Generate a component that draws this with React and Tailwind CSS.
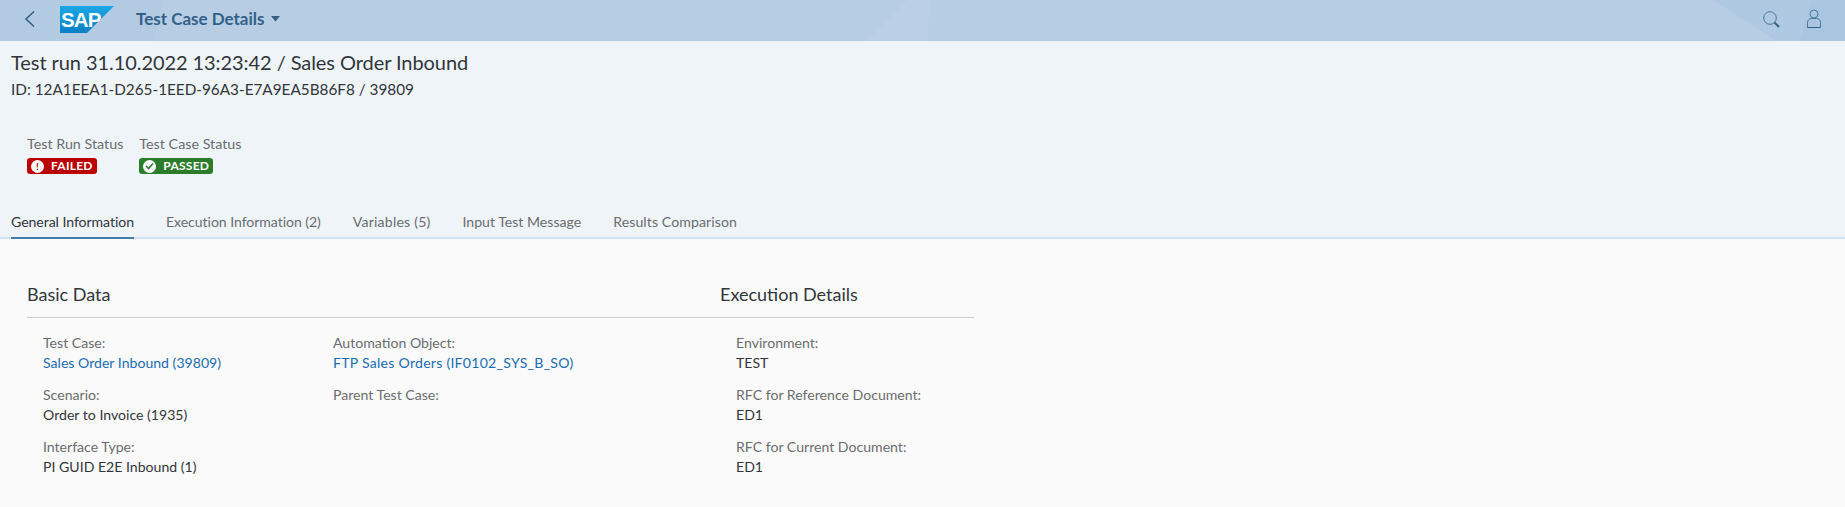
import React from 'react';

const FONT = "font-['Lato','Liberation_Sans',sans-serif]";

const SapLogo = () => (
  <svg width="54" height="27" viewBox="0 0 54 27">
    <defs>
      <linearGradient id="sapBlue" x1="0" y1="0" x2="0" y2="1">
        <stop offset="0" stopColor="#1ba8e4" />
        <stop offset="1" stopColor="#0a7fc7" />
      </linearGradient>
    </defs>
    <polygon points="0,0 54,0 27,27 0,27" fill="url(#sapBlue)" />
    <text x="1" y="20.500" fontFamily="'Liberation Sans', sans-serif" fontWeight="700" fontSize="20.500" letterSpacing="-0.9" fill="#fff">SAP</text>
  </svg>
);

const SearchIcon = () => (
  <svg width="17" height="17" viewBox="0 0 17 17" fill="none">
    <circle cx="7" cy="7" r="6.300" stroke="#4d7a9c" strokeWidth="1" />
    <path d="M11.500 11.500l4.500 4.500" stroke="#346187" strokeWidth="2" />
  </svg>
);

const UserIcon = () => (
  <svg width="16" height="20" viewBox="0 0 16 20" fill="none" stroke="#4d7a9c" strokeWidth="1">
    <circle cx="8" cy="5" r="4" />
    <path d="M1.500 18.500v-5c0-2.500 2-4 4-4h5c2 0 4 1.500 4 4v5z" />
    <path d="M1.500 18.500h13" stroke="#346187" />
  </svg>
);

const Badge = ({ color, icon, children }) => (
  <span className={`inline-flex h-4 items-center gap-[7px] rounded-[3px] pl-[4px] pr-[4px] text-[12px] font-bold tracking-[0.25px] text-white ${color}`}>
    {icon}
    {children}
  </span>
);

const Field = ({ label, value, link, wide }) => (
  <div className="flex h-[52px] flex-col text-[14.1px] leading-5">
    <span className="text-[#6a6d70]">{label}</span>
    {value && (
      <span className={`${link ? 'text-[#1a6db3]' : 'text-[#32363a]'} ${wide ? 'tracking-[0.25px]' : ''}`}>{value}</span>
    )}
  </div>
);

export default function App() {
  const tabs = [
    { label: 'General Information', cls: 'border-b-2 border-[#427cac] text-[#32363a] tracking-[-0.06px]' },
    { label: 'Execution Information (2)', cls: 'text-[#6a6d70] tracking-[-0.06px]' },
    { label: 'Variables (5)', cls: 'text-[#6a6d70] tracking-[0.2px]' },
    { label: 'Input Test Message', cls: 'text-[#6a6d70]' },
    { label: 'Results Comparison', cls: 'text-[#6a6d70] tracking-[0.1px]' },
  ];

  return (
    <div className={`flex h-[507px] w-[1845px] flex-col overflow-hidden bg-[#fafafa] ${FONT}`}>
      {/* Shell bar */}
      <header className="relative flex h-[41px] shrink-0 items-center bg-[#b6cde4] pb-[3px]">
        <svg className="absolute inset-0" width="1845" height="41">
          <polygon points="0,0 163,0 154,41 0,41" fill="#b2cae2" />
          <polygon points="907,0 929,0 928,41 867,41" fill="#bbd0e6" />
          <polygon points="1713,0 1845,0 1845,41 1777,41" fill="#b0c9e2" />
          <polygon points="1812,0 1845,0 1845,41 1800,41" fill="#a9c5e0" />
        </svg>
        <div className="relative ml-[24px] flex items-center">
          <svg width="12" height="18" viewBox="0 0 12 18" fill="none">
            <path d="M10 1.500L2 9l8 7.500" stroke="#346187" strokeWidth="1.600" />
          </svg>
          <div className="ml-[24px] flex">
            <SapLogo />
          </div>
          <span className="ml-[22px] text-[17px] font-bold text-[#346187]">Test Case Details</span>
          <svg className="ml-[6px]" width="9" height="6" viewBox="0 0 9 6">
            <polygon points="0,0 9,0 4.500,5.500" fill="#346187" />
          </svg>
        </div>
        <div className="relative ml-auto mr-[23px] flex items-center gap-[26px]">
          <SearchIcon />
          <UserIcon />
        </div>
      </header>

      {/* Object header */}
      <section className="h-[198px] shrink-0 border-b-2 border-[#d1e0ee] bg-[#eff4f9]">
        <div className="pl-[11px] pt-[8px]">
          <h1 className="text-[20px] leading-[27px] tracking-[-0.07px] text-[#32363a]">Test run 31.10.2022 13:23:42 / Sales Order Inbound</h1>
          <p className="mt-[3px] text-[15.300px] leading-5 text-[#32363a]">ID: 12A1EEA1-D265-1EED-96A3-E7A9EA5B86F8 / 39809</p>
        </div>
        <div className="ml-[27px] mt-[36px] flex gap-4">
          <div>
            <div className="text-[14.300px] leading-[18px] text-[#6a6d70]">Test Run Status</div>
            <div className="mt-[5px] flex">
              <Badge
                color="bg-[#bb0000]"
                icon={
                  <span className="flex h-[13px] w-[13px] items-center justify-center rounded-full bg-white text-[10px] font-bold leading-none text-[#bb0000]">!</span>
                }
              >
                FAILED
              </Badge>
            </div>
          </div>
          <div>
            <div className="text-[14.300px] leading-[18px] text-[#6a6d70]">Test Case Status</div>
            <div className="mt-[5px] flex">
              <Badge
                color="bg-[#2b7d2b]"
                icon={
                  <span className="flex h-[13px] w-[13px] items-center justify-center rounded-full bg-white">
                    <svg width="9" height="8" viewBox="0 0 9 8" fill="none">
                      <path d="M1 4l2.500 2.500L8 1.500" stroke="#2b7d2b" strokeWidth="1.600" />
                    </svg>
                  </span>
                }
              >
                PASSED
              </Badge>
            </div>
          </div>
        </div>
        <nav className="ml-[11px] mt-[31px] flex h-[34px] gap-[32px] text-[14.100px]">
          {tabs.map((tab) => (
            <div key={tab.label} className={`flex h-[34px] items-start pt-[6px] ${tab.cls}`}>
              {tab.label}
            </div>
          ))}
        </nav>
      </section>

      {/* Details */}
      <main className="ml-[27px] w-[947px] pt-[42px]">
        <div className="flex h-[37px] border-b border-[#cccccc] text-[18px] leading-[26px] text-[#32363a]">
          <h2 className="w-[693px]">Basic Data</h2>
          <h2>Execution Details</h2>
        </div>
        <div className="flex pt-[15px]">
          <div className="ml-[16px] w-[290px]">
            <Field label="Test Case:" value="Sales Order Inbound (39809)" link />
            <Field label="Scenario:" value="Order to Invoice (1935)" />
            <Field label="Interface Type:" value="PI GUID E2E Inbound (1)" />
          </div>
          <div className="w-[403px]">
            <Field label="Automation Object:" value="FTP Sales Orders (IF0102_SYS_B_SO)" link wide />
            <Field label="Parent Test Case:" />
          </div>
          <div>
            <Field label="Environment:" value="TEST" />
            <Field label="RFC for Reference Document:" value="ED1" />
            <Field label="RFC for Current Document:" value="ED1" />
          </div>
        </div>
      </main>
    </div>
  );
}
